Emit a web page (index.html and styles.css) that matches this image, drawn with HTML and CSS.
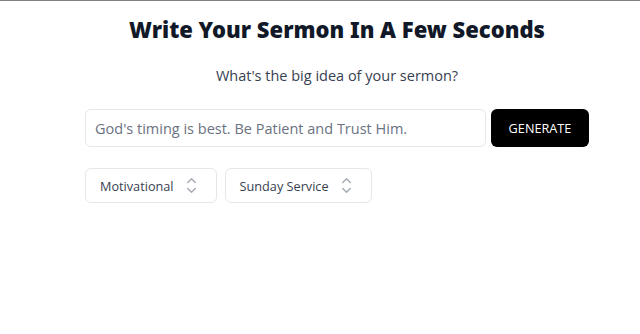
FILE: index.html
```html
<!DOCTYPE html>
<html>
<head>
<meta charset="utf-8">
<link rel="stylesheet" href="styles.css">
</head>
<body>
<div class="topline"></div>
<main class="wrap">
  <h1 class="title">Write Your Sermon In A Few Seconds</h1>
  <p class="subtitle">What's the big idea of your sermon?</p>
  <div class="row">
    <input class="idea" type="text" placeholder="God's timing is best. Be Patient and Trust Him.">
    <button class="gen">GENERATE</button>
  </div>
  <div class="selects">
    <div class="select">
      <span>Motivational</span>
      <svg class="chev" width="9" height="15" viewBox="7.5 4.5 9 15" fill="none" stroke="#a3a8b1" stroke-width="1.4" stroke-linecap="round" stroke-linejoin="round"><path d="M8.25 15 12 18.75 15.75 15M8.25 9 12 5.25 15.75 9"/></svg>
    </div>
    <div class="select">
      <span>Sunday Service</span>
      <svg class="chev" width="9" height="15" viewBox="7.5 4.5 9 15" fill="none" stroke="#a3a8b1" stroke-width="1.4" stroke-linecap="round" stroke-linejoin="round"><path d="M8.25 15 12 18.75 15.75 15M8.25 9 12 5.25 15.75 9"/></svg>
    </div>
  </div>
</main>
</body>
</html>
```

FILE: styles.css
```css
* { box-sizing: border-box; }
html, body { margin: 0; padding: 0; background: #fff; }
body { font-family: "Open Sans", "Noto Sans", sans-serif; color: #374151; }
.topline { height: 1px; background: #808080; }
.wrap {
  width: 504px;
  margin-left: 85px;
  display: flex;
  flex-direction: column;
}
.title {
  margin: 13px 0 0;
  text-align: center;
  font-family: "Noto Sans", sans-serif;
  font-weight: 900;
  font-size: 22px;
  line-height: 30px;
  color: #111827;
}
.subtitle {
  margin: 22px 0 0;
  text-align: center;
  font-size: 14.5px;
  line-height: 20px;
  color: #374151;
}
.row {
  margin-top: 23px;
  display: flex;
  gap: 5px;
}
.idea {
  flex: 1;
  height: 38px;
  border: 1px solid #e5e7eb;
  border-radius: 6px;
  padding: 0 9px;
  font-family: "Open Sans", sans-serif;
  font-size: 14.5px;
  color: #111827;
  outline: none;
}
.idea::placeholder { color: #6b7280; }
.gen {
  width: 98px;
  height: 38px;
  background: #000;
  color: #fff;
  border: none;
  border-radius: 6px;
  font-family: "Open Sans", sans-serif;
  font-size: 12.7px;
  padding: 0;
}
.selects {
  margin-top: 21px;
  display: flex;
  gap: 8px;
}
.select {
  height: 35px;
  border: 1px solid #e5e7eb;
  border-radius: 6px;
  display: flex;
  align-items: center;
  padding: 0 20px 0 14px;
  font-size: 12.7px;
  color: #374151;
}
.chev { margin-left: 13px; }
```
